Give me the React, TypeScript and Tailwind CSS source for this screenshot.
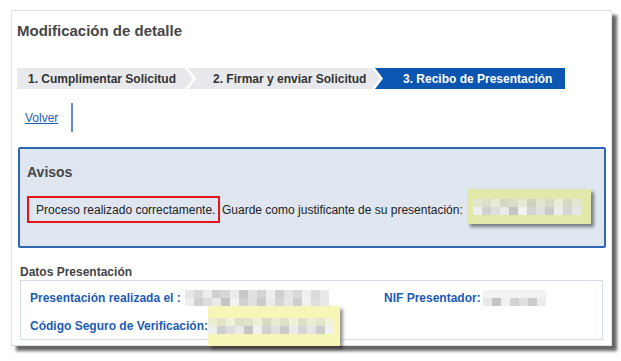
import React from 'react'

const font = { fontFamily: '"Liberation Sans", Arial, sans-serif' }

// pixelated redaction blocks
function Redacted({ cells, className }: { cells: string[][]; className?: string }) {
  return (
    <div className={`flex flex-col blur-[0.6px] ${className ?? ''}`}>
      {cells.map((row, i) => (
        <div key={i} className="flex">
          {row.map((c, j) => (
            <div key={j} className="h-[8px] w-[9px]" style={{ background: c }} />
          ))}
        </div>
      ))}
    </div>
  )
}

const g1 = ['#e6e6e6', '#d9d9d9', '#ececec', '#cfcfcf', '#d6d6d6', '#ebebeb', '#c8c8c8', '#e2e2e2', '#d4d4d4', '#efefef', '#d0d0d0', '#e4e4e4', '#d8d8d8', '#f0f0f0', '#dadada', '#e8e8e8']
const g2 = ['#eeeeee', '#d0d0d0', '#dddddd', '#e9e9e9', '#c4c4c4', '#f1f1f1', '#d2d2d2', '#e0e0e0', '#cbcbcb', '#ececec', '#d5d5d5', '#e5e5e5', '#cdcdcd', '#f2f2f2', '#dedede', '#e7e7e7']

export default function App() {
  return (
    <div className="w-[621px] h-[361px] bg-white pt-[10px] pl-[11px] overflow-hidden" style={font}>
      <div className="w-[601px] h-[336px] bg-white border border-[#e2e2e2] shadow-[5px_5px_3px_rgba(0,0,0,0.6)] flex flex-col">
        <h1 className="mt-[11px] ml-[5px] text-[15px] leading-[18px] font-bold text-[#464646]">Modificación de detalle</h1>

        <div className="mt-[28px] ml-[5px] flex h-[21px] text-[12px] font-bold">
          <div className="w-[176px] bg-[#e7e9ec] text-[#333] flex items-center pl-[11px] [clip-path:polygon(0_0,calc(100%_-_8px)_0,100%_50%,calc(100%_-_8px)_100%,0_100%)]">
            1. Cumplimentar Solicitud
          </div>
          <div className="-ml-[5px] w-[192px] bg-[#e7e9ec] text-[#333] flex items-center pl-[25px] [clip-path:polygon(0_0,calc(100%_-_8px)_0,100%_50%,calc(100%_-_8px)_100%,0_100%,8px_50%)]">
            2. Firmar y enviar Solicitud
          </div>
          <div className="-ml-[5px] w-[190px] bg-[#0b56b1] text-white flex items-center pl-[28px] [clip-path:polygon(0_0,100%_0,100%_100%,0_100%,8px_50%)]">
            3. Recibo de Presentación
          </div>
        </div>

        <div className="mt-[14px] flex">
          <div className="h-[29px] flex items-center pl-[13px] pr-[13px] border-r-2 border-[#5d8fd2]">
            <a href="#" className="text-[12px] text-[#1d5eb3] underline">Volver</a>
          </div>
        </div>

        <div className="mt-[15px] ml-[6px] w-[588px] h-[101px] bg-[#dfe6f0] border-2 border-[#2d66b1] rounded-[2px] px-[7px] pt-[14px]">
          <div className="text-[14px] leading-[18px] font-bold text-[#454545]">Avisos</div>
          <div className="mt-[14px] flex items-center text-[12px] text-[#222]">
            <div className="h-[27px] w-[193px] border-2 border-[#e3141c] flex items-center pl-[7px]">Proceso realizado correctamente.</div>
            <span className="ml-[2px]">Guarde como justificante de su presentación:</span>
            <div className="ml-[4px] -mt-[6px] w-[124px] h-[35px] bg-[#e1e8a9] shadow-[3px_3px_3px_rgba(0,0,0,0.45)] flex items-center px-[6px]">
              <Redacted cells={[g1.slice(0, 12).map((c) => c + 'aa'), g2.slice(0, 12)]} />
            </div>
          </div>
        </div>

        <div className="mt-[16px] ml-[8px] text-[12px] leading-[16px] font-bold text-[#444]">Datos Presentación</div>
        <div className="ml-[8px] w-[583px] h-[60px] border border-[#d4dfec] pl-[9px] pt-[8px] text-[12px] font-bold text-[#1b5bb4]">
          <div className="flex h-[18px] items-center">
            <div className="w-[354px] flex items-center">
              <span>Presentación realizada el :</span>
              <Redacted className="ml-[4px]" cells={[g1.slice(0, 16), g2.slice(0, 16)]} />
            </div>
            <div className="flex items-center">
              <span>NIF Presentador:</span>
              <Redacted className="ml-[2px]" cells={[g1.slice(2, 9).map(() => '#f2f2f2'), g2.slice(3, 10)]} />
            </div>
          </div>
          <div className="mt-[10px] flex h-[18px] items-center">
            <span>Código Seguro de Verificación:</span>
            <div className="-my-[11px] h-[40px] w-[132px] bg-[#f6f6b6] shadow-[3px_3px_3px_rgba(0,0,0,0.4)] flex items-center">
              <Redacted cells={[g1.slice(0, 14).map((c) => c + '99'), g2.slice(0, 14)]} />
            </div>
          </div>
        </div>
      </div>
    </div>
  )
}
